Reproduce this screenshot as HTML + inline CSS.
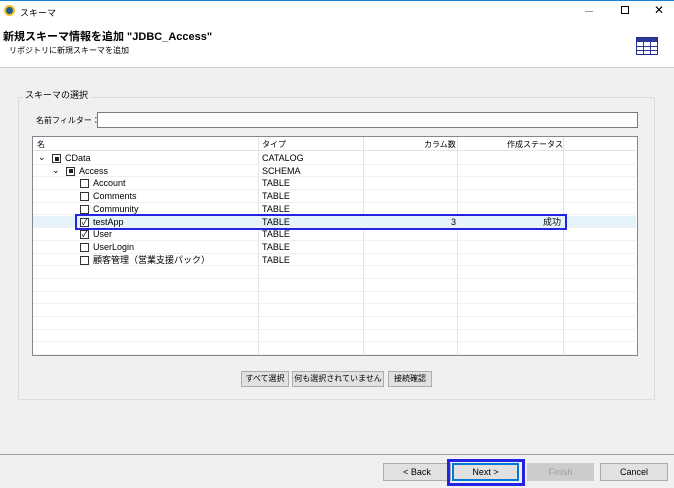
<!DOCTYPE html><html><head><style>
*{margin:0;padding:0;box-sizing:border-box}
body{width:674px;height:488px;background:#f0f0f0;font-family:"Liberation Sans","Noto Sans CJK JP",sans-serif;font-size:9px;color:#000;position:relative;overflow:hidden;white-space:nowrap}
.a{position:absolute}
.btn{position:absolute;background:#e1e1e1;border:1px solid #adadad;text-align:center;font-size:9px;white-space:nowrap;overflow:hidden}
.row{position:absolute;left:33px;width:603px;height:12.7px;border-bottom:1px solid #f0f0f0;line-height:13px}
.cb{position:absolute;width:9px;height:9px;border:1px solid #333;background:#fff;top:2px}
.vl{position:absolute;top:137px;height:218px;width:1px;background:#e4e4e4}
</style></head><body>
<div class="a" style="left:0;top:0;width:674px;height:1px;background:#1883d7"></div>
<div class="a" style="left:0;top:1px;width:674px;height:21px;background:#fff"></div>
<div class="a" style="left:4px;top:5px;width:11px;height:11px;border-radius:50%;background:#1c5c8e;border:2px solid #f0c020"></div>
<div class="a" style="left:20px;top:6px;font-size:9px">スキーマ</div>
<div class="a" style="left:585px;top:11px;width:8px;height:1px;background:#999"></div>
<div class="a" style="left:621px;top:6px;width:8px;height:8px;border:1px solid #000"></div>
<div class="a" style="left:654px;top:3px;font-size:12px">✕</div>
<div class="a" style="left:0;top:22px;width:674px;height:46px;background:#fff;border-bottom:1px solid #d0d0d0"></div>
<div class="a" style="left:3px;top:28px;font-size:11px;font-weight:bold">新規スキーマ情報を追加 "JDBC_Access"</div>
<div class="a" style="left:9px;top:45px;font-size:8px">リポジトリに新規スキーマを追加</div>
<svg class="a" style="left:636px;top:37px" width="22" height="18"><rect x="0.5" y="0.5" width="21" height="17" fill="#fff" stroke="#2a2a8a"/><rect x="1" y="1" width="20" height="4" fill="#2a3a9a"/><g stroke="#2a3a9a"><line x1="7.5" y1="1" x2="7.5" y2="17"/><line x1="14.5" y1="1" x2="14.5" y2="17"/><line x1="1" y1="9.5" x2="21" y2="9.5"/><line x1="1" y1="13.5" x2="21" y2="13.5"/></g></svg>
<div class="a" style="left:18px;top:97px;width:637px;height:303px;border:1px solid #dcdcdc"></div>
<div class="a" style="left:23px;top:88px;background:#f0f0f0;padding:0 2px;font-size:9px">スキーマの選択</div>
<div class="a" style="left:36px;top:115px;font-size:8px">名前フィルター：</div>
<div class="a" style="left:97px;top:112px;width:541px;height:16px;background:#fff;border:1px solid #7a7a7a"></div>
<div class="a" style="left:32px;top:136px;width:606px;height:220px;background:#fff;border:1px solid #828790"></div>
<div class="vl" style="left:258px"></div><div class="vl" style="left:363px"></div><div class="vl" style="left:457px"></div><div class="vl" style="left:563px"></div>
<div class="a" style="left:37px;top:139px;font-size:8px">名</div>
<div class="a" style="left:262px;top:139px;font-size:8px">タイプ</div>
<div class="a" style="left:424px;top:139px;font-size:8px">カラム数</div>
<div class="a" style="left:507px;top:139px;font-size:8px">作成ステータス</div>
<div class="a" style="left:33px;top:150px;width:603px;height:1px;background:#e4e4e4"></div>
<div class="row" style="top:152px"><span class="a" style="left:5px;top:-1px">⌄</span><div class="cb" style="left:19px"><div style="margin:1.5px;width:4px;height:4px;background:#222"></div></div><span class="a" style="left:32px">CData</span><span class="a" style="left:229px">CATALOG</span></div>
<div class="row" style="top:164.7px"><span class="a" style="left:19px;top:-1px">⌄</span><div class="cb" style="left:33px"><div style="margin:1.5px;width:4px;height:4px;background:#222"></div></div><span class="a" style="left:46px">Access</span><span class="a" style="left:229px">SCHEMA</span></div>
<div class="row" style="top:177.4px"><div class="cb" style="left:47px"></div><span class="a" style="left:60px">Account</span><span class="a" style="left:229px">TABLE</span></div>
<div class="row" style="top:190.1px"><div class="cb" style="left:47px"></div><span class="a" style="left:60px">Comments</span><span class="a" style="left:229px">TABLE</span></div>
<div class="row" style="top:202.8px"><div class="cb" style="left:47px"></div><span class="a" style="left:60px">Community</span><span class="a" style="left:229px">TABLE</span></div>
<div class="row" style="top:215.5px;background:#e5f3fb"><div class="cb" style="left:47px;font-size:8px;line-height:7px;text-align:center">✓</div><span class="a" style="left:60px">testApp</span><span class="a" style="left:229px">TABLE</span><span class="a" style="left:418px">3</span><span class="a" style="left:510px">成功</span></div>
<div class="row" style="top:228.2px"><div class="cb" style="left:47px;font-size:8px;line-height:7px;text-align:center">✓</div><span class="a" style="left:60px">User</span><span class="a" style="left:229px">TABLE</span></div>
<div class="row" style="top:240.9px"><div class="cb" style="left:47px"></div><span class="a" style="left:60px">UserLogin</span><span class="a" style="left:229px">TABLE</span></div>
<div class="row" style="top:253.6px"><div class="cb" style="left:47px"></div><span class="a" style="left:60px">顧客管理（営業支援パック）</span><span class="a" style="left:229px">TABLE</span></div>
<div class="row" style="top:266.3px"></div><div class="row" style="top:279px"></div><div class="row" style="top:291.7px"></div><div class="row" style="top:304.4px"></div><div class="row" style="top:317.1px"></div><div class="row" style="top:329.8px"></div><div class="row" style="top:342.5px"></div>
<div class="a" style="left:75px;top:214px;width:492px;height:16px;border:2px solid #2323e6"></div>
<div class="btn" style="left:241px;top:371px;width:48px;height:16px;line-height:14px;font-size:8px">すべて選択</div>
<div class="btn" style="left:292px;top:371px;width:92px;height:16px;line-height:14px;font-size:8px">何も選択されていません</div>
<div class="btn" style="left:388px;top:371px;width:44px;height:16px;line-height:14px;font-size:8px">接続確認</div>
<div class="a" style="left:0;top:454px;width:674px;height:1px;background:#a0a0a0"></div>
<div class="btn" style="left:383px;top:463px;width:68px;height:18px;line-height:16px">&lt; Back</div>
<div class="btn" style="left:452px;top:463px;width:67px;height:18px;line-height:14px;border:2px solid #0078d7">Next &gt;</div>
<div class="btn" style="left:527px;top:463px;width:67px;height:18px;line-height:16px;color:#a0a0a0;border-color:#ccc;background:#ccc">Finish</div>
<div class="btn" style="left:600px;top:463px;width:68px;height:18px;line-height:16px">Cancel</div>
<div class="a" style="left:447px;top:459px;width:78px;height:27px;border:3px solid #2323e6"></div>
</body></html>
